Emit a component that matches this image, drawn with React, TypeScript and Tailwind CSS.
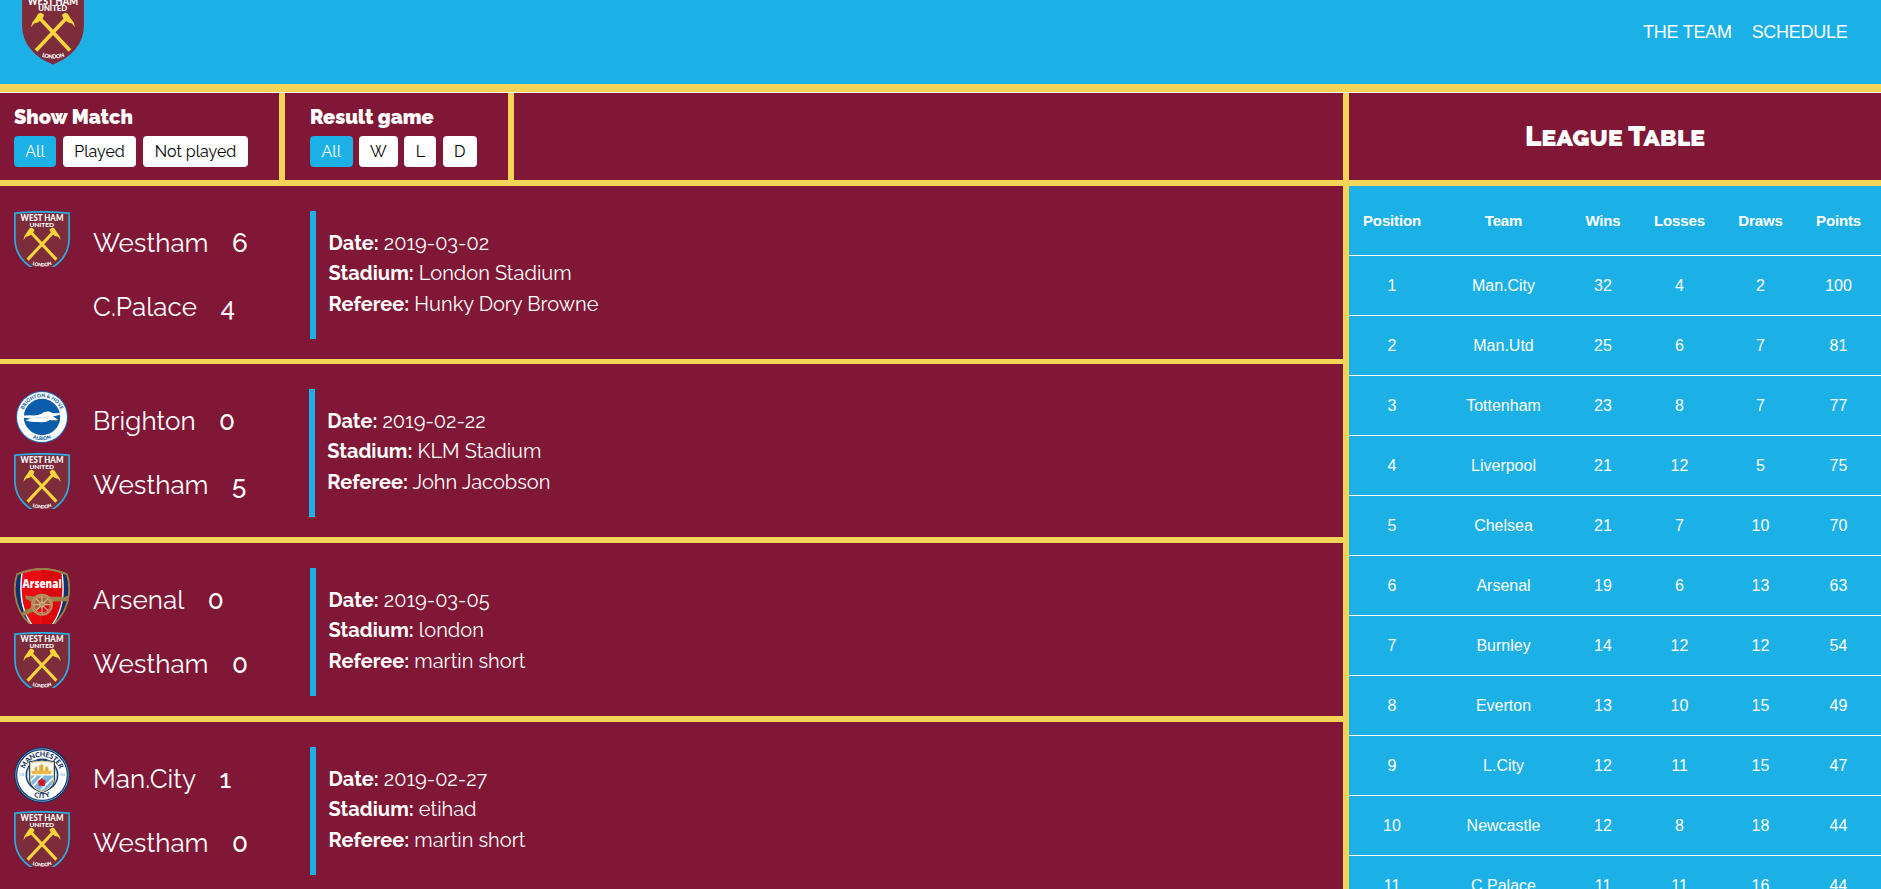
import React from "react";

type CrestName = "westham" | "brighton" | "arsenal" | "city" | null;

function WestHamCrest({ className }: { className: string }) {
  return (
    <svg className={className} viewBox="0 0 56 66" fill="none">
      <path d="M0.9 2.2 Q28 -0.6 55.1 2.2 V27 C55.1 43 45 55 28 61.6 C11 55 0.9 43 0.9 27 Z" fill="#7c2c3b" stroke="#27aee3" strokeWidth="1.7" />
      <g fill="#fff" fontFamily="Lato, sans-serif" fontWeight="900">
        <text x="6.6" y="10.4" fontSize="8.8" textLength="42.8" lengthAdjust="spacingAndGlyphs">WEST HAM</text>
        <text x="15.4" y="15.5" fontSize="6" textLength="24.6" lengthAdjust="spacingAndGlyphs">UNITED</text>
      </g>
      <path id="londonArc" d="M17.4 53.3 Q28 57.7 39 53.3" />
      <text fill="#fff" fontFamily="Lato, sans-serif" fontWeight="900" fontSize="4.8">
        <textPath href="#londonArc" startOffset="1" textLength="20">LONDON</textPath>
      </text>
      <g stroke="#f9d53c" strokeWidth="3.1">
        <path d="M17 21.5 L42.4 48.6" />
        <path d="M39 21.5 L13.6 48.6" />
      </g>
      <g fill="#f9d53c">
        <path d="M17.6 16.6 L20.4 18.4 L19.6 21 L15.6 24.8 L12 25.8 L9.3 29 L10.4 25 L13.6 20.6 L15.4 17.6Z" />
        <path d="M38.4 16.6 L35.6 18.4 L36.4 21 L40.4 24.8 L44 25.8 L46.7 29 L45.6 25 L42.4 20.6 L40.6 17.6Z" />
      </g>
    </svg>
  );
}

function BrightonCrest() {
  return (
    <svg className="h-[56px] w-[56px]" viewBox="0 0 56 56" fill="none">
      <circle cx="28" cy="28" r="26" fill="#1b6bb5" />
      <circle cx="28" cy="28" r="25" fill="#fff" />
      <circle cx="28" cy="28" r="18.2" fill="#0b5cab" />
      <path id="bhTop" d="M8.2 28 A19.8 19.8 0 0 1 47.8 28" />
      <path id="bhBottom" d="M4.8 28 A23.2 23.2 0 0 0 51.2 28" />
      <g fill="#0b5cab" fontFamily="Lato, sans-serif" fontWeight="900" fontSize="5" textAnchor="middle">
        <text><textPath href="#bhTop" startOffset="50%" textLength="47">BRIGHTON &amp; HOVE</textPath></text>
        <text><textPath href="#bhBottom" startOffset="50%" textLength="19">ALBION</textPath></text>
      </g>
      <path d="M4 27 Q13 26.2 19 26.4 Q24 26.6 27 25 Q30 22 35 22.6 Q38 24.4 42 24.2 L50.8 23.8 Q46 26 39 27.4 Q41.6 28.8 44 31 Q39 31.6 36 31 Q31 34.2 25 33 Q18 33.6 11.5 31.2 L17 29.6 Q9 29 4 27Z" fill="#fff" />
      <path d="M41 30 L44.3 30.8 L41.5 31.8Z" fill="#e9bd2f" />
      <path d="M21 28.4 Q28 29.8 35 27.6" stroke="#a9c8e4" strokeWidth=".6" />
    </svg>
  );
}

function ArsenalCrest() {
  return (
    <svg className="h-[56px] w-[56px]" viewBox="0 0 56 56" fill="none">
      <path d="M3.2 6 Q28 -4.5 52.8 6 Q56.2 15 54.8 27 C53 43 43 56 28 65 C13 56 3 43 1.2 27 Q-0.2 15 3.2 6Z" fill="#12306b" stroke="#9c8248" strokeWidth="1.8" />
      <path d="M7.2 5.6 Q28 -1.6 48.8 5.6 C50.4 20 51.6 40 38.6 57 H17.4 C4.4 40 5.6 20 7.2 5.6Z" fill="#fff" />
      <path d="M8.7 5.2 Q28 -1.2 47.3 5.2 C49 20 50 40 37 57 H19 C6 40 7 20 8.7 5.2Z" fill="#ea0a12" />
      <path d="M28 1.2 Q38 1.8 47.3 5.2 C49 20 50 40 37 57 H28Z" fill="#dc060f" />
      <path d="M4 6 Q28 -3.8 52 6" stroke="#9c8248" strokeWidth="1.7" />
      <text x="8.6" y="20" fill="#fff" fontFamily="Open Sans, sans-serif" fontWeight="800" fontSize="11.4" textLength="39" lengthAdjust="spacingAndGlyphs">Arsenal</text>
      <path d="M11 27.6 L20 28.6 L52 28.8 L52 28 L55 28 L55 33.2 L52 33.2 L40 33.4 L30 37 L20 43.4 L10 47.6 L7 46.8 L9 43.6 L17 39.4 L18 34 L12 31Z" fill="#9c8248" />
      <circle cx="28" cy="36.7" r="10" fill="#c9142044" stroke="#ad9560" strokeWidth="1.9" />
      <circle cx="28" cy="36.7" r="8.2" stroke="#e8dcc0" strokeWidth=".5" />
      <path d="M28 28 V45.4 M19.3 36.7 H36.7 M21.9 30.6 L34.1 42.8 M34.1 30.6 L21.9 42.8" stroke="#cdb98a" strokeWidth="1.2" />
      <circle cx="28" cy="36.7" r="2.4" fill="#ad9560" stroke="#e8dcc0" strokeWidth=".5" />
    </svg>
  );
}

function CityCrest() {
  return (
    <svg className="h-[56px] w-[56px]" viewBox="0 0 56 56" fill="none">
      <circle cx="28" cy="28" r="27.8" fill="#14315f" />
      <circle cx="28" cy="28" r="26.3" stroke="#6cabdd" strokeWidth=".9" />
      <circle cx="28" cy="28" r="24.8" fill="#fff" />
      <circle cx="28" cy="28" r="16.4" fill="#14315f" />
      <circle cx="28" cy="28" r="15.2" fill="#8fc3e8" />
      <circle cx="28" cy="28" r="14.2" fill="#fff" />
      <path d="M15.4 14.6 Q28 11.6 40.6 14.6 V31 C40.6 38.6 35.6 43 28 45.8 C20.4 43 15.4 38.6 15.4 31Z" fill="#fff" stroke="#14315f" strokeWidth="1" />
      <path d="M16.6 28.6 H39.4 V31 C39.4 38 35 42 28 44.6 C21 42 16.6 38 16.6 31Z" fill="#7ab5e2" />
      <path d="M16.6 34 L22 28.6 M19 39 L29 28.6 M27 43 L39 31" stroke="#fff" strokeWidth="1.7" />
      <path d="M16.6 15.6 Q28 12.9 39.4 15.6 V31 C39.4 38 35 42 28 44.6 C21 42 16.6 38 16.6 31Z" stroke="#d9b65c" strokeWidth=".8" />
      <path d="M18 27.2 L17.4 23.6 L20.4 24 V20.8 L23.4 20 V23.4 H25 V18.4 L29.6 17.6 V23.4 H31 V20 L34.6 20.6 V24 L38 23.2 L36.6 27.2Z" fill="#eab84a" />
      <path d="M27.4 16.4 V24 M22 19 V24 M33 19 V24" stroke="#c68c26" strokeWidth=".7" />
      <circle cx="27.8" cy="35.6" r="3.4" fill="#cf2030" />
      <path d="M27.8 31 L29.6 33.2 L32.3 33.9 L30.7 36.3 L30.9 39.2 L27.8 38.2 L24.7 39.2 L24.9 36.3 L23.3 33.9 L26 33.2Z" fill="#cf2030" />
      <circle cx="27.8" cy="35.6" r="1.1" fill="#8c1b26" />
      <path id="mcTop" d="M9.7 28 A18.3 18.3 0 0 1 46.3 28" />
      <path id="mcBottom" d="M4.9 28 A23.1 23.1 0 0 0 51.1 28" />
      <g fill="#14315f" fontFamily="Lato, sans-serif" fontWeight="900" fontSize="7" textAnchor="middle">
        <text><textPath href="#mcTop" startOffset="50%" textLength="45">MANCHESTER</textPath></text>
        <text><textPath href="#mcBottom" startOffset="50%" textLength="17">CITY</textPath></text>
      </g>
      <g fill="#8fc3e8" fontFamily="Lato, sans-serif" fontWeight="700" fontSize="4.4">
        <text x="5" y="29.4">18</text>
        <text x="46" y="29.4">94</text>
      </g>
    </svg>
  );
}

function Crest({ name }: { name: CrestName }) {
  return (
    <div className="h-[56px] w-[56px] shrink-0 overflow-hidden">
      {name === "westham" && <WestHamCrest className="h-[66px] w-[56px]" />}
      {name === "brighton" && <BrightonCrest />}
      {name === "arsenal" && <ArsenalCrest />}
      {name === "city" && <CityCrest />}
    </div>
  );
}

interface Side {
  name: string;
  score: number;
  crest: CrestName;
}

interface Match {
  sides: [Side, Side];
  date: string;
  stadium: string;
  referee: string;
  teamsWidth: string;
  detailsPadding: string;
  divider: string;
}

const matches: Match[] = [
  {
    sides: [{ name: "Westham", score: 6, crest: "westham" }, { name: "C.Palace", score: 4, crest: null }],
    date: "2019-03-02", stadium: "London Stadium", referee: "Hunky Dory Browne",
    teamsWidth: "w-[310px]", detailsPadding: "pl-[12.6px]", divider: "border-b-[5px]",
  },
  {
    sides: [{ name: "Brighton", score: 0, crest: "brighton" }, { name: "Westham", score: 5, crest: "westham" }],
    date: "2019-02-22", stadium: "KLM Stadium", referee: "John Jacobson",
    teamsWidth: "w-[309px]", detailsPadding: "pl-[12.3px]", divider: "border-b-[6px]",
  },
  {
    sides: [{ name: "Arsenal", score: 0, crest: "arsenal" }, { name: "Westham", score: 0, crest: "westham" }],
    date: "2019-03-05", stadium: "london", referee: "martin short",
    teamsWidth: "w-[310px]", detailsPadding: "pl-[12.6px]", divider: "border-b-[6px]",
  },
  {
    sides: [{ name: "Man.City", score: 1, crest: "city" }, { name: "Westham", score: 0, crest: "westham" }],
    date: "2019-02-27", stadium: "etihad", referee: "martin short",
    teamsWidth: "w-[310px]", detailsPadding: "pl-[12.6px]", divider: "border-b-[6px]",
  },
];

const standings: [number, string, number, number, number, number][] = [
  [1, "Man.City", 32, 4, 2, 100],
  [2, "Man.Utd", 25, 6, 7, 81],
  [3, "Tottenham", 23, 8, 7, 77],
  [4, "Liverpool", 21, 12, 5, 75],
  [5, "Chelsea", 21, 7, 10, 70],
  [6, "Arsenal", 19, 6, 13, 63],
  [7, "Burnley", 14, 12, 12, 54],
  [8, "Everton", 13, 10, 15, 49],
  [9, "L.City", 12, 11, 15, 47],
  [10, "Newcastle", 12, 8, 18, 44],
  [11, "C.Palace", 11, 11, 16, 44],
];

function FilterButton({ label, width, active }: { label: string; width: string; active?: boolean }) {
  return (
    <button className={`h-[31px] rounded-[4px] text-center text-[16px] leading-[31px] ${width} ${active ? "bg-[#1bb1e7] text-white" : "bg-white text-black"}`}>
      {label}
    </button>
  );
}

function Detail({ label, value }: { label: string; value: string }) {
  return (
    <p className="h-[30.4px] leading-[30.4px]">
      <b className="font-bold">{label}</b> {value}
    </p>
  );
}

function MatchRow({ match }: { match: Match }) {
  return (
    <article className={`box-content flex h-[173px] shrink-0 border-[#f3d459] ${match.divider}`}>
      <div className={`mt-[25px] h-[128px] shrink-0 pl-[14px] ${match.teamsWidth}`}>
        {match.sides.map((side) => (
          <div key={side.name} className="flex h-[64px] items-start text-[26px] leading-[64px]">
            <Crest name={side.crest} />
            <span className="ml-[23px] tracking-[0.05px]">{side.name}</span>
            <span className="ml-[23.4px] font-medium">{side.score}</span>
          </div>
        ))}
      </div>
      <div className={`mt-[25px] h-[128px] border-l-[6px] border-[#1bb1e7] pt-[17px] text-[20px] ${match.detailsPadding}`}>
        <Detail label="Date:" value={match.date} />
        <Detail label="Stadium:" value={match.stadium} />
        <Detail label="Referee:" value={match.referee} />
      </div>
    </article>
  );
}

export default function App() {
  return (
    <div className="flex h-[889px] w-full flex-col overflow-hidden bg-white font-['Raleway','Lato',sans-serif] text-white">
      <header className="flex h-[92px] shrink-0 items-start justify-between overflow-hidden border-b-[8px] border-[#f3d459] bg-[#1bb1e7] pr-[33.5px] pl-[20px]">
        <WestHamCrest className="-mt-[7px] h-[78px] w-[66px]" />
        <nav className="mt-[22px] flex gap-[20px] font-['Liberation_Sans',Arial,sans-serif] text-[18px] leading-[20px] tracking-[-0.27px]">
          <a>THE TEAM</a>
          <a>SCHEDULE</a>
        </nav>
      </header>

      <main className="mt-px flex min-h-0 grow bg-[#801737]">
        <section className="flex w-[1349px] shrink-0 flex-col overflow-hidden border-r-[6px] border-[#f3d459]">
          <div className="flex h-[93px] shrink-0 border-b-[6px] border-[#f3d459]">
            <div className="w-[285px] border-r-[6px] border-[#f3d459] pt-[12px] pl-[14px]">
              <h3 className="text-[20px] leading-[24px] font-black">Show Match</h3>
              <div className="mt-[7px] flex gap-[7px]">
                <FilterButton label="All" width="w-[42px]" active />
                <FilterButton label="Played" width="w-[73px]" />
                <FilterButton label="Not played" width="w-[105px]" />
              </div>
            </div>
            <div className="w-[229px] border-r-[6px] border-[#f3d459] pt-[12px] pl-[25px]">
              <h3 className="text-[20px] leading-[24px] font-black">Result game</h3>
              <div className="mt-[7px] flex gap-[6.4px]">
                <FilterButton label="All" width="w-[42.6px]" active />
                <FilterButton label="W" width="w-[39px]" />
                <FilterButton label="L" width="w-[32px]" />
                <FilterButton label="D" width="w-[34px]" />
              </div>
            </div>
          </div>
          {matches.map((match) => (
            <MatchRow key={match.date} match={match} />
          ))}
        </section>

        <aside className="flex grow flex-col overflow-hidden bg-[#1bb1e7]">
          <div className="flex h-[93px] shrink-0 items-center justify-center border-b-[6px] border-[#f3d459] bg-[#801737]">
            <h2 className="text-[28px] leading-[32px] font-black tracking-[-0.15px] [font-variant-caps:small-caps]">League Table</h2>
          </div>
          <div className="font-['Liberation_Sans',Arial,sans-serif] text-[16px]">
            <div className="grid h-[70px] grid-cols-[86px_137px_62px_91px_71px_85px] border-b border-white text-center text-[15px] leading-[69px] font-bold tracking-[-0.15px]">
              <span>Position</span>
              <span>Team</span>
              <span>Wins</span>
              <span>Losses</span>
              <span>Draws</span>
              <span>Points</span>
            </div>
            {standings.map((row) => (
              <div key={row[0]} className="grid h-[60px] grid-cols-[86px_137px_62px_91px_71px_85px] border-b border-white text-center leading-[59px]">
                {row.map((cell, i) => (
                  <span key={i}>{cell}</span>
                ))}
              </div>
            ))}
          </div>
        </aside>
      </main>
    </div>
  );
}
